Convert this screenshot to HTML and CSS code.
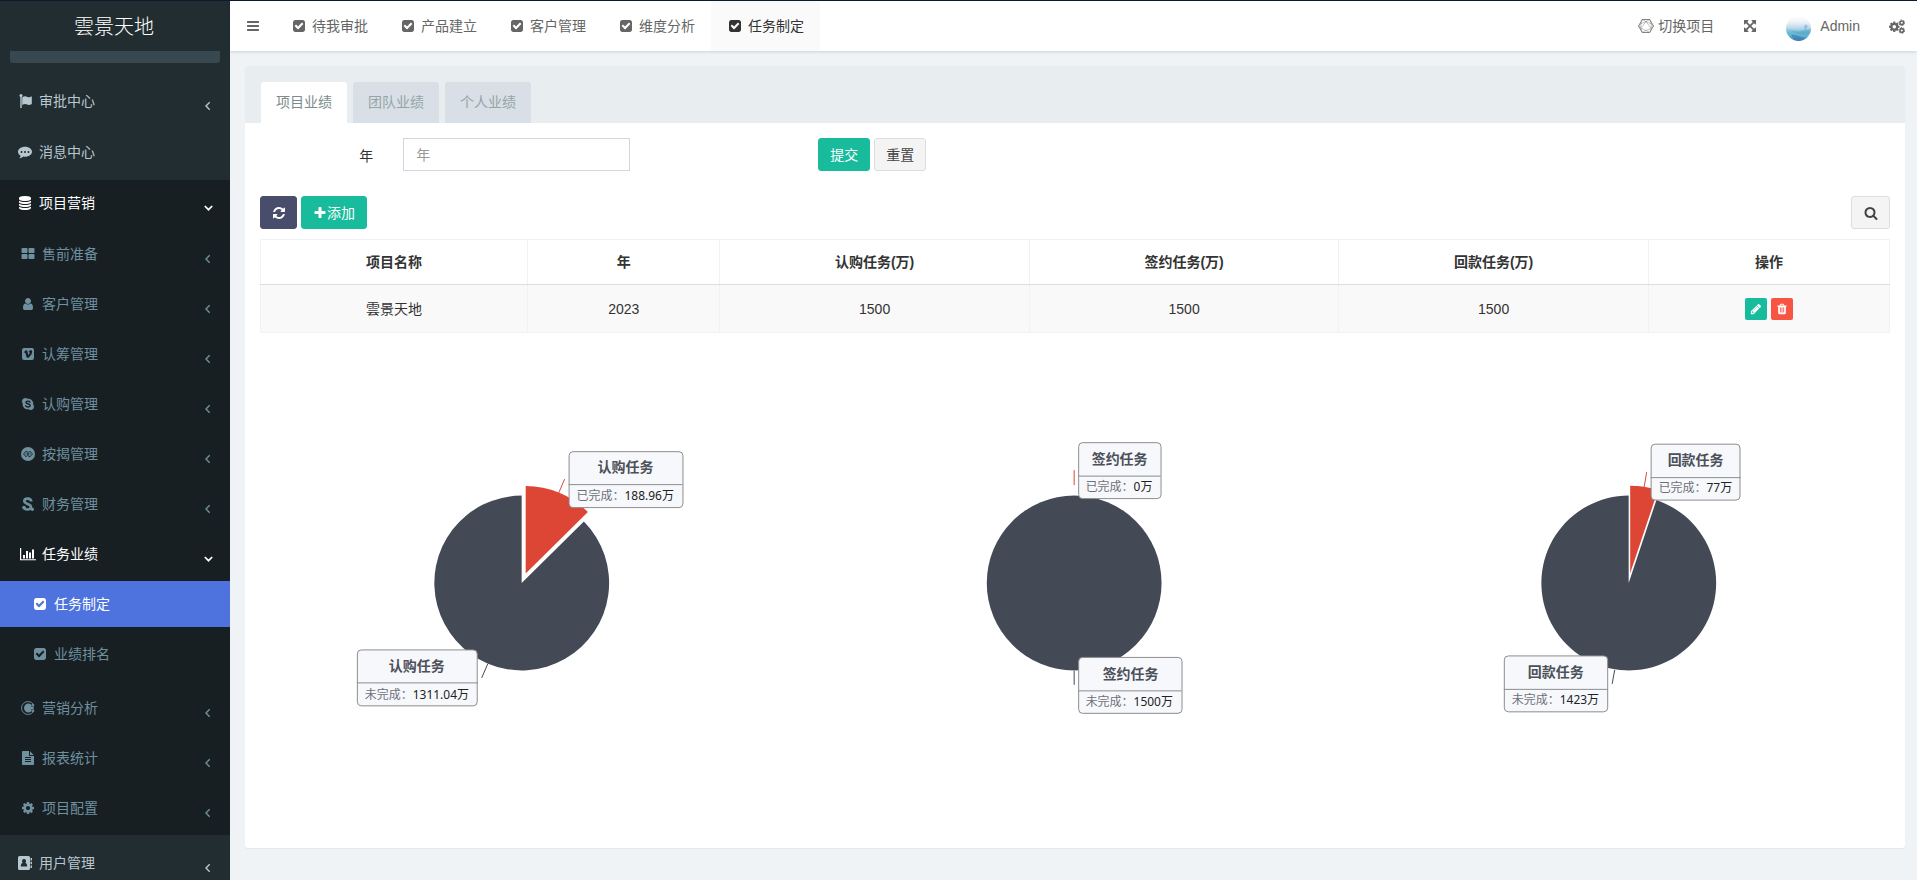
FILE: index.html
```html
<!DOCTYPE html>
<html lang="zh-CN">
<head>
<meta charset="utf-8">
<title>任务制定</title>
<link rel="stylesheet" href="styles.css">
</head>
<body>
<svg class="sprite" aria-hidden="true">
  <symbol id="check" viewBox="0 0 1792 1792"><path d="M813 1299l614-614q19-19 19-45t-19-45l-102-102q-19-19-45-19t-45 19l-467 467-211-211q-19-19-45-19t-45 19l-102 102q-19 19-19 45t19 45l358 358q19 19 45 19t45-19zm851-883v960q0 119-84.500 203.500t-203.500 84.500h-960q-119 0-203.500-84.500t-84.500-203.500v-960q0-119 84.500-203.500t203.500-84.500h960q119 0 203.500 84.500t84.500 203.500z"/></symbol>
  <symbol id="bars" viewBox="0 0 1792 1792"><path d="M1664 1344v128q0 26-19 45t-45 19h-1408q-26 0-45-19t-19-45v-128q0-26 19-45t45-19h1408q26 0 45 19t19 45zm0-512v128q0 26-19 45t-45 19h-1408q-26 0-45-19t-19-45v-128q0-26 19-45t45-19h1408q26 0 45 19t19 45zm0-512v128q0 26-19 45t-45 19h-1408q-26 0-45-19t-19-45v-128q0-26 19-45t45-19h1408q26 0 45 19t19 45z"/></symbol>
  <symbol id="search" viewBox="0 0 1792 1792"><path d="M1216 832q0-185-131.500-316.500t-316.500-131.500-316.500 131.500-131.500 316.500 131.500 316.500 316.500 131.500 316.500-131.500 131.500-316.500zm512 832q0 52-38 90t-90 38q-54 0-90-38l-343-342q-179 124-399 124-143 0-273.500-55.500t-225-150-150-225-55.500-273.500 55.500-273.500 150-225 225-150 273.500-55.500 273.500 55.500 225 150 150 225 55.500 273.500q0 220-124 399l343 343q37 37 37 90z"/></symbol>
  <symbol id="refresh" viewBox="0 0 1792 1792"><path d="M1639 1056q0 5-1 7-64 268-268 434.500t-478 166.500q-146 0-282.500-55t-243.500-157l-129 129q-19 19-45 19t-45-19-19-45v-448q0-26 19-45t45-19h448q26 0 45 19t19 45-19 45l-137 137q71 66 161 102t187 36q134 0 250-65t186-179q11-17 53-117 8-23 30-23h192q13 0 22.500 9.500t9.500 22.500zm25-800v448q0 26-19 45t-45 19h-448q-26 0-45-19t-19-45 19-45l138-138q-148-137-349-137-134 0-250 65t-186 179q-11 17-53 117-8 23-30 23h-199q-13 0-22.500-9.500t-9.500-22.500v-7q65-268 270-434.500t480-166.500q146 0 284 55.500t245 156.500l130-129q19-19 45-19t45 19 19 45z"/></symbol>
  <symbol id="plus" viewBox="0 0 1792 1792"><path d="M1600 736v192q0 40-28 68t-68 28h-416v416q0 40-28 68t-68 28h-192q-40 0-68-28t-28-68v-416h-416q-40 0-68-28t-28-68v-192q0-40 28-68t68-28h416v-416q0-40 28-68t68-28h192q40 0 68 28t28 68v416h416q40 0 68 28t28 68z"/></symbol>
  <symbol id="expand" viewBox="0 0 1792 1792"><path d="M1411 541l-355 355 355 355 144-144q29-31 70-14 39 17 39 59v448q0 26-19 45t-45 19h-448q-42 0-59-40-17-39 14-69l144-144-355-355-355 355 144 144q31 30 14 69-17 40-59 40h-448q-26 0-45-19t-19-45v-448q0-42 40-59 39-17 69 14l144 144 355-355-355-355-144 144q-19 19-45 19-12 0-24-5-40-17-40-59v-448q0-26 19-45t45-19h448q42 0 59 40 17 39-14 69l-144 144 355 355 355-355-144-144q-31-30-14-69 17-40 59-40h448q26 0 45 19t19 45v448q0 42-39 59-13 5-25 5-26 0-45-19z"/></symbol>
  <symbol id="pencil" viewBox="0 0 1792 1792"><path d="M491 1536l91-91-235-235-91 91v107h128v128h107zm523-928q0-22-22-22-10 0-17 7l-542 542q-7 7-7 17 0 22 22 22 10 0 17-7l542-542q7-7 7-17zm-54-192l416 416-832 832h-416v-416zm683 96q0 53-37 90l-166 166-416-416 166-165q36-38 90-38 53 0 91 38l235 234q37 39 37 91z"/></symbol>
  <symbol id="trash" viewBox="0 0 1792 1792"><path d="M704 1376v-704q0-14-9-23t-23-9h-64q-14 0-23 9t-9 23v704q0 14 9 23t23 9h64q14 0 23-9t9-23zm256 0v-704q0-14-9-23t-23-9h-64q-14 0-23 9t-9 23v704q0 14 9 23t23 9h64q14 0 23-9t9-23zm256 0v-704q0-14-9-23t-23-9h-64q-14 0-23 9t-9 23v704q0 14 9 23t23 9h64q14 0 23-9t9-23zm-544-992h448l-48-117q-7-9-17-11h-317q-10 2-17 11zm928 32v64q0 14-9 23t-23 9h-96v948q0 83-47 143.500t-113 60.500h-832q-66 0-113-58.500t-47-141.500v-952h-96q-14 0-23-9t-9-23v-64q0-14 9-23t23-9h309l70-167q15-37 54-63t79-26h320q40 0 79 26t54 63l70 167h309q14 0 23 9t9 23z"/></symbol>
  <symbol id="database" viewBox="0 0 1792 1792"><path d="M896 768q237 0 443-43t325-127v170q0 69-103 128t-280 93.500-385 34.500-385-34.500-280-93.500-103-128v-170q119 84 325 127t443 43zm0 768q237 0 443-43t325-127v170q0 69-103 128t-280 93.500-385 34.500-385-34.500-280-93.500-103-128v-170q119 84 325 127t443 43zm0-384q237 0 443-43t325-127v170q0 69-103 128t-280 93.500-385 34.500-385-34.500-280-93.500-103-128v-170q119 84 325 127t443 43zm0-1152q208 0 385 34.500t280 93.500 103 128v128q0 69-103 128t-280 93.500-385 34.500-385-34.500-280-93.500-103-128v-128q0-69 103-128t280-93.500 385-34.500z"/></symbol>
  <symbol id="grid" viewBox="0 0 1792 1792"><path d="M832 1024v384q0 52-38 90t-90 38h-512q-52 0-90-38t-38-90v-384q0-52 38-90t90-38h512q52 0 90 38t38 90zm0-768v384q0 52-38 90t-90 38h-512q-52 0-90-38t-38-90v-384q0-52 38-90t90-38h512q52 0 90 38t38 90zm896 768v384q0 52-38 90t-90 38h-512q-52 0-90-38t-38-90v-384q0-52 38-90t90-38h512q52 0 90 38t38 90zm0-768v384q0 52-38 90t-90 38h-512q-52 0-90-38t-38-90v-384q0-52 38-90t90-38h512q52 0 90 38t38 90z"/></symbol>
  <symbol id="user" viewBox="0 0 1792 1792"><path d="M1536 1399q0 109-62.500 187t-150.500 78h-854q-88 0-150.500-78t-62.500-187q0-85 8.500-160.500t31.500-152 58.500-131 94-89 134.500-34.500q131 128 313 128t313-128q76 0 134.500 34.500t94 89 58.500 131 31.500 152 8.500 160.500zm-256-887q0 159-112.500 271.500t-271.500 112.500-271.500-112.500-112.500-271.500 112.500-271.500 271.500-112.500 271.500 112.500 112.500 271.500z"/></symbol>
  <symbol id="file" viewBox="0 0 1792 1792"><path d="M1596 476q14 14 28 36h-472v-472q22 14 36 28zm-476 164h544v1056q0 40-28 68t-68 28h-1344q-40 0-68-28t-28-68v-1600q0-40 28-68t68-28h800v544q0 40 28 68t68 28zm160 736v-64q0-14-9-23t-23-9h-704q-14 0-23 9t-9 23v64q0 14 9 23t23 9h704q14 0 23-9t9-23zm0-256v-64q0-14-9-23t-23-9h-704q-14 0-23 9t-9 23v64q0 14 9 23t23 9h704q14 0 23-9t9-23zm0-256v-64q0-14-9-23t-23-9h-704q-14 0-23 9t-9 23v64q0 14 9 23t23 9h704q14 0 23-9t9-23z"/></symbol>
  <symbol id="cog" viewBox="0 0 1792 1792"><path d="M1152 896q0-106-75-181t-181-75-181 75-75 181 75 181 181 75 181-75 75-181zm512-109v222q0 12-8 23t-20 13l-185 28q-19 54-39 91 35 50 107 138 10 12 10 25t-9 23q-27 37-99 108t-94 71q-12 0-26-9l-138-108q-44 23-91 38-16 136-29 186-7 28-36 28h-222q-14 0-24.500-8.500t-11.500-21.500l-28-184q-49-16-90-37l-141 107q-10 9-25 9-14 0-25-11-126-114-165-168-7-10-7-23 0-12 8-23 15-21 51-66.500t54-70.500q-27-50-41-99l-183-27q-13-2-21-12.500t-8-23.500v-222q0-12 8-23t19-13l186-28q14-46 39-92-40-57-107-138-10-12-10-24 0-10 9-23 26-36 98.500-107.500t94.500-71.500q13 0 26 10l138 107q44-23 91-38 16-136 29-186 7-28 36-28h222q14 0 24.500 8.500t11.500 21.500l28 184q49 16 90 37l142-107q9-9 24-9 13 0 25 10 129 119 165 170 7 8 7 22 0 12-8 23-15 21-51 66.500t-54 70.500q26 50 41 98l183 28q13 2 21 12.500t8 23.500z"/></symbol>
  <symbol id="cogs" viewBox="0 0 15 14"><use href="#cog" x="-0.800" y="1.500" width="11.500" height="11.500"/><g fill="none" stroke="currentColor"><circle cx="12" cy="3.500" r="1.700" stroke-width="1.500"/><circle cx="12" cy="3.500" r="2.700" stroke-width="0.900" stroke-dasharray="1.400 1.400"/><circle cx="12" cy="10.700" r="1.700" stroke-width="1.500"/><circle cx="12" cy="10.700" r="2.700" stroke-width="0.900" stroke-dasharray="1.400 1.400"/></g></symbol>
  <symbol id="flag" viewBox="0 0 14 14"><circle cx="3" cy="1.600" r="1.500"/><path d="M2.300 1.500h1.400v12.500H2.300zM4.200 3.200c2-1 3.300-1.200 5.200-.3 1.500.7 2.500.4 4.400-.6v7.700c-2 1.100-3.200 1.200-4.700.5-1.800-.9-3-.6-4.900.4z"/></symbol>
  <symbol id="comment" viewBox="0 0 14 14"><path fill-rule="evenodd" d="M7 1.800c3.900 0 7 2.200 7 5s-3.100 5-7 5c-.6 0-1.200 0-1.700-.2-1.200 1-2.500 1.500-4 1.700.8-.8 1.200-1.500 1.400-2.500C1 9.900 0 8.400 0 6.800c0-2.800 3.100-5 7-5zM3.500 5.900a1 1 0 100 2 1 1 0 000-2zm3.500 0a1 1 0 100 2 1 1 0 000-2zm3.500 0a1 1 0 100 2 1 1 0 000-2z"/></symbol>
  <symbol id="vimeo" viewBox="0 0 14 14"><path fill-rule="evenodd" d="M3 1h8a2 2 0 012 2v8a2 2 0 01-2 2H3a2 2 0 01-2-2V3a2 2 0 012-2zM2.700 5.200l.5.600c.8-.5 1-.4 1.300.6l.9 3.200c.5 1.500 1.300 1.700 2.600.6 1.600-1.400 2.900-3.200 3.200-5.100.4-2.400-2.900-2.500-3.500.2 1.100-.5 1.200.4.700 1.300-.8 1.500-1.200 1.500-1.400.4L6.500 4.400c-.2-1.200-.9-1.500-1.900-.8z"/></symbol>
  <symbol id="skype" viewBox="0 0 14 14"><path d="M4.400 1c.9 0 1.600.3 2.200.7 3.400-.3 6.100 2.500 5.600 5.800 1.900 2.500.3 5.500-2.500 5.500-.9 0-1.700-.3-2.300-.8-3.500.4-6.200-2.400-5.700-5.800C0 3.900 1.600 1 4.400 1z"/><path d="M9 5.100C8.300 3.700 4.900 3.800 5 5.400c.1 1.700 4.200 1 4.200 3.100 0 1.900-3.700 1.900-4.500.2" fill="none" stroke="#181f23" stroke-width="1.400" stroke-linecap="round"/></symbol>
  <symbol id="circle-links" viewBox="0 0 14 14"><circle cx="7" cy="7" r="7"/><path d="M6.800 5L5 4.200 2.500 7 5 9.800 7.500 7 6.200 5.700M7.200 9L9 9.800 11.500 7 9 4.200 6.500 7l1.300 1.300M4.400 7h1M8.600 7h1" fill="none" stroke="#181f23" stroke-width="0.900"/></symbol>
  <symbol id="finance" viewBox="0 0 14 14"><path d="M10.300 4.500C10.100.8 3.500.6 3.300 4c-.2 3.600 6.900 2.200 6.600 6-.3 3.300-6.200 3.200-7.100.4" fill="none" stroke="currentColor" stroke-width="2.600"/><circle cx="3" cy="10.500" r="1.800"/><circle cx="11.300" cy="12.300" r="1.700"/></symbol>
  <symbol id="chart" viewBox="0 0 16 14"><path d="M0 1h1.200v11.200H16v1H0zM3 8h2v3.500H3zM6 4h2v7.500H6zM9 5.500h2v6H9zM12 2.500h2v9h-2z"/></symbol>
  <symbol id="analysis" viewBox="0 0 14 14"><path d="M12.300 3.200A6.500 6.500 0 1012.300 10.800" fill="none" stroke="currentColor" stroke-width="0.900"/><path d="M10.800 4.200A4.400 4.400 0 1010.800 9.800L9.800 8.600h2.900v-3.200H9.800zM10.800 2.600l2.600 1-.6 2-2-1zM10.800 11.400l2.600-1-.6-2-2 1z"/></symbol>
  <symbol id="contact" viewBox="0 0 14 14"><path fill-rule="evenodd" d="M1.500 0h9A1.500 1.500 0 0112 1.500v11a1.500 1.500 0 01-1.500 1.500h-9A1.500 1.500 0 010 12.500v-11A1.500 1.500 0 011.500 0zM6 3a2 2.200 0 00-1.300 3.900C3.400 7.100 2.800 8.300 2.800 10.500h6.400c0-2.200-.6-3.400-1.900-3.600A2 2.200 0 006 3z"/><path d="M12.500 2h1.500v2.500h-1.500zM12.500 5.700h1.500v2.500h-1.500zM12.500 9.400h1.500v2.500h-1.500z"/></symbol>
  <symbol id="left" viewBox="0 0 10 10"><path d="M6.700 1.300L3 5l3.700 3.700" fill="none" stroke="currentColor" stroke-width="1.400"/></symbol>
  <symbol id="down" viewBox="0 0 10 10"><path d="M1.800 3L5.500 6.700 9.200 3" fill="none" stroke="currentColor" stroke-width="1.700"/></symbol>
  <symbol id="hexagon" viewBox="0 0 16 14"><path d="M4.300.5h7.400L15.500 7l-3.800 6.500H4.300L.5 7z" fill="none" stroke="currentColor" stroke-width="0.800"/><path d="M4.300.5l-1.500 4.300v4.500l1.500 4.200L8 11.500l3.700 2 1.500-4.200V4.800L11.700.5 8 2.500zM.5 7l2.300-2.200L8 2.500l5.200 2.300L15.500 7l-2.300 2.300L8 11.500 2.800 9.300zM2.800 9.300L8 2.500l5.200 6.800" fill="none" stroke="currentColor" stroke-width="0.400"/></symbol>
</svg>

<div class="app">
  <aside class="sidebar">
    <a class="brand" href="#">雲景天地</a>
    <div class="side-search"></div>
    <ul class="menu">
      <li><a class="item" href="#"><svg class="icon"><use href="#flag"/></svg>审批中心<svg class="arrow"><use href="#left"/></svg></a></li>
      <li><a class="item" href="#"><svg class="icon"><use href="#comment"/></svg>消息中心</a></li>
      <li class="open"><a class="item current" href="#"><svg class="icon"><use href="#database"/></svg>项目营销<svg class="arrow"><use href="#down"/></svg></a>
        <ul class="submenu">
          <li><a class="item" href="#"><svg class="icon"><use href="#grid"/></svg>售前准备<svg class="arrow"><use href="#left"/></svg></a></li>
          <li><a class="item" href="#"><svg class="icon"><use href="#user"/></svg>客户管理<svg class="arrow"><use href="#left"/></svg></a></li>
          <li><a class="item" href="#"><svg class="icon"><use href="#vimeo"/></svg>认筹管理<svg class="arrow"><use href="#left"/></svg></a></li>
          <li><a class="item" href="#"><svg class="icon"><use href="#skype"/></svg>认购管理<svg class="arrow"><use href="#left"/></svg></a></li>
          <li><a class="item" href="#"><svg class="icon"><use href="#circle-links"/></svg>按揭管理<svg class="arrow"><use href="#left"/></svg></a></li>
          <li><a class="item" href="#"><svg class="icon"><use href="#finance"/></svg>财务管理<svg class="arrow"><use href="#left"/></svg></a></li>
          <li><a class="item current" href="#"><svg class="icon wide"><use href="#chart"/></svg>任务业绩<svg class="arrow"><use href="#down"/></svg></a>
            <ul class="leafmenu">
              <li><a class="item selected" href="#"><svg class="icon"><use href="#check"/></svg>任务制定</a></li>
              <li><a class="item" href="#"><svg class="icon"><use href="#check"/></svg>业绩排名</a></li>
            </ul>
          </li>
          <li><a class="item" href="#"><svg class="icon"><use href="#analysis"/></svg>营销分析<svg class="arrow"><use href="#left"/></svg></a></li>
          <li><a class="item" href="#"><svg class="icon"><use href="#file"/></svg>报表统计<svg class="arrow"><use href="#left"/></svg></a></li>
          <li><a class="item" href="#"><svg class="icon"><use href="#cog"/></svg>项目配置<svg class="arrow"><use href="#left"/></svg></a></li>
        </ul>
      </li>
      <li><a class="item" href="#"><svg class="icon"><use href="#contact"/></svg>用户管理<svg class="arrow"><use href="#left"/></svg></a></li>
    </ul>
  </aside>

  <div class="page">
    <header class="topbar">
      <button class="toggle" type="button" aria-label="菜单"><svg class="icon"><use href="#bars"/></svg></button>
      <nav class="pages">
        <a href="#"><svg class="icon"><use href="#check"/></svg>待我审批</a>
        <a href="#"><svg class="icon"><use href="#check"/></svg>产品建立</a>
        <a href="#"><svg class="icon"><use href="#check"/></svg>客户管理</a>
        <a href="#"><svg class="icon"><use href="#check"/></svg>维度分析</a>
        <a class="active" href="#"><svg class="icon"><use href="#check"/></svg>任务制定</a>
      </nav>
      <div class="tools">
        <a class="switch" href="#"><svg class="icon wide"><use href="#hexagon"/></svg>切换项目</a>
        <button class="plain" type="button" aria-label="全屏"><svg class="icon"><use href="#expand"/></svg></button>
        <a class="account" href="#">
          <svg class="avatar" viewBox="0 0 25 25"><defs><linearGradient id="sky" x1="0" y1="0" x2="0" y2="1"><stop offset="0" stop-color="#fff"/><stop offset=".25" stop-color="#edf2f7"/><stop offset=".5" stop-color="#b5d6e8"/><stop offset=".65" stop-color="#68bdd4"/><stop offset=".8" stop-color="#62b4d1"/><stop offset="1" stop-color="#3b72a8"/></linearGradient></defs><circle cx="12.500" cy="12.500" r="12.500" fill="url(#sky)"/><path d="M0 12c5 2 10 5 15 3 5-1 8-4 6-6-1-1-3 0-3 2 0 3 4 4 7 1 0 4-2 6-4 7-8 0-14-3-21-7z" fill="#5299c4" opacity=".4"/><path d="M5 19c6-1 10 3 15 3-5 4-12 3-15-3z" fill="#3f7fb5" opacity=".7"/></svg>
          Admin</a>
        <button class="plain" type="button" aria-label="设置"><svg class="icon cogs"><use href="#cogs"/></svg></button>
      </div>
    </header>

    <main class="content">
      <section class="panel">
        <nav class="tabs">
          <a class="active" href="#">项目业绩</a>
          <a href="#">团队业绩</a>
          <a href="#">个人业绩</a>
        </nav>
        <div class="panel-body">
          <form class="filter">
            <div class="field">
              <label for="year">年</label>
              <div class="control"><input id="year" type="text" placeholder="年"></div>
            </div>
            <div class="field actions">
              <button class="btn success" type="submit">提交</button>
              <button class="btn" type="reset">重置</button>
            </div>
          </form>
          <div class="toolbar">
            <button class="btn primary" type="button" aria-label="刷新"><svg class="icon"><use href="#refresh"/></svg></button>
            <button class="btn success" type="button"><svg class="icon"><use href="#plus"/></svg>添加</button>
            <button class="btn find" type="button" aria-label="搜索"><svg class="icon"><use href="#search"/></svg></button>
          </div>
          <table class="list">
            <colgroup><col class="c-name"><col class="c-year"><col class="c-task"><col class="c-task"><col class="c-task"><col></colgroup>
            <thead><tr><th>项目名称</th><th>年</th><th>认购任务(万)</th><th>签约任务(万)</th><th>回款任务(万)</th><th>操作</th></tr></thead>
            <tbody><tr><td>雲景天地</td><td>2023</td><td>1500</td><td>1500</td><td>1500</td>
              <td><div class="ops"><button class="op edit" type="button" aria-label="编辑"><svg class="icon small"><use href="#pencil"/></svg></button><button class="op delete" type="button" aria-label="删除"><svg class="icon small"><use href="#trash"/></svg></button></div></td></tr></tbody>
          </table>

          <div class="charts">
            <svg class="pie" viewBox="0 0 554 500" role="img" aria-label="认购任务">
              <path class="rest" d="M277 250L339.300 188.500A87.500 87.500 0 1 1 277 162.500z"/>
              <path class="done" d="M281 240.500V153A87.500 87.500 0 0 1 343.300 179z"/>
              <path class="line-done" d="M314 160l6-14"/><path class="line-rest" d="M243 331l-6 14"/>
              <g class="tip"><rect x="324.500" y="118.500" width="114" height="56" rx="4"/><path d="M324 151.500h114"/><text class="title" x="381" y="139">认购任务</text><text class="row" x="332" y="167">已完成：<tspan>188.96万</tspan></text></g>
              <g class="tip"><rect x="112.500" y="317" width="120" height="56" rx="4"/><path d="M112 350h121"/><text class="title" x="172" y="338">认购任务</text><text class="row" x="120" y="366">未完成：<tspan>1311.04万</tspan></text></g>
            </svg>
            <svg class="pie" viewBox="0 0 554 500" role="img" aria-label="签约任务">
              <circle class="rest" cx="276.500" cy="250" r="87.500"/>
              <path class="line-done" d="M276.500 137v15"/><path class="line-rest" d="M276.500 338v14"/>
              <g class="tip"><rect x="281" y="109.500" width="82.500" height="56" rx="4"/><path d="M281 143h82"/><text class="title" x="322" y="131">签约任务</text><text class="row" x="288" y="158">已完成：<tspan>0万</tspan></text></g>
              <g class="tip"><rect x="281" y="324.500" width="103.500" height="56" rx="4"/><path d="M281 358h103"/><text class="title" x="333" y="346">签约任务</text><text class="row" x="288" y="373">未完成：<tspan>1500万</tspan></text></g>
            </svg>
            <svg class="pie" viewBox="0 0 554 500" role="img" aria-label="回款任务">
              <path class="rest" d="M277 250L304.800 167A87.500 87.500 0 1 1 277 162.500z"/>
              <path class="done" d="M278.500 240.200V152.700A87.500 87.500 0 0 1 306.300 157.200z"/>
              <path class="line-done" d="M292.500 154l2.500-15"/><path class="line-rest" d="M263 337l-2.500 14"/>
              <g class="tip"><rect x="299.500" y="111" width="89" height="56" rx="4"/><path d="M299 144.500h90"/><text class="title" x="344" y="132">回款任务</text><text class="row" x="307" y="159">已完成：<tspan>77万</tspan></text></g>
              <g class="tip"><rect x="152.500" y="323" width="103.500" height="56" rx="4"/><path d="M152 356.500h104"/><text class="title" x="204" y="344">回款任务</text><text class="row" x="160" y="371">未完成：<tspan>1423万</tspan></text></g>
            </svg>
          </div>
        </div>
      </section>
    </main>
  </div>
</div>
</body>
</html>
```
FILE: styles.css
```css
* { box-sizing: border-box; }
body {
  margin: 0;
  font: 14px/20px "Liberation Sans", "Noto Sans CJK SC", sans-serif;
  color: #333;
  background: #eff3f6;
}
a { color: inherit; text-decoration: none; }
ul { list-style: none; margin: 0; padding: 0; }
button, input { font: inherit; }
svg { fill: currentColor; flex: none; }
.sprite { position: absolute; width: 0; height: 0; }
.icon { width: 14px; height: 14px; }
.icon.small { width: 12px; height: 12px; }
.icon.wide { width: 16px; }
.icon.cogs { width: 16px; height: 15px; }

.app {
  display: flex;
  height: 100vh;
  overflow: hidden;
  border-top: 1px solid #0b1b2c;
}

.sidebar { flex: none; width: 230px; background: #222d32; color: #b8c7ce; overflow: hidden; }
.brand {
  display: flex;
  align-items: center;
  justify-content: center;
  height: 50px;
  padding: 2px 2px 0 0;
  font-size: 20px;
  font-weight: 300;
  color: #fff;
}
.side-search { height: 12px; margin: 0 10px 15px; background: #374850; border-radius: 0 0 3px 3px; }
.item { display: flex; align-items: center; height: 46px; padding: 0 17px 0 18px; }
.item .icon { margin-right: 7px; }
.item .icon.wide { margin-right: 6px; }
.item .arrow { width: 10px; height: 10px; margin: 10px 0 0 auto; }
.menu { display: flex; flex-direction: column; gap: 5px; }
.menu .open { background: #181f23; }
.submenu { display: flex; flex-direction: column; gap: 4px; padding: 5px 0 4px; }
.submenu .item { padding-left: 21px; color: #6e909f; }
.submenu .item .wide { margin-left: -1px; }
.leafmenu { display: flex; flex-direction: column; gap: 4px; padding: 4px 0; }
.leafmenu .item { padding-left: 33px; }
.menu .item.current { color: #fff; }
.menu .item.selected { background: #4e73df; color: #fff; }

.page { flex: 1; min-width: 0; }
.topbar {
  display: flex;
  align-items: stretch;
  height: 50px;
  background: #fff;
  color: #666;
  box-shadow: 0 1px 3px rgba(0, 21, 41, .15);
}
.toggle, .plain { display: flex; align-items: center; padding: 0; border: 0; background: none; color: inherit; }
.toggle { width: 45px; padding-left: 16px; }
.pages { display: flex; }
.pages a { display: flex; align-items: center; gap: 6px; width: 109px; padding: 0 16px 0 17px; }
.pages .active { background: #fafafa; color: #333; }
.tools { display: flex; margin-left: auto; padding-right: 12px; gap: 29px; }
.tools a { display: flex; align-items: center; }
.switch { gap: 4px; }
.account { gap: 9px; }
.avatar { width: 25px; height: 25px; margin-top: 4px; }

.content { padding: 15px 12px 0 15px; }
.panel { background: #fff; border-radius: 3px; box-shadow: 0 1px 1px rgba(0, 0, 0, .05); }
.tabs { display: flex; gap: 6px; padding: 16px 16px 0; background: #e8edf0; border-radius: 3px 3px 0 0; }
.tabs a { height: 41px; padding: 10px 15px; background: #d8dfe6; color: #95a5a6; border-radius: 3px 3px 0 0; }
.tabs .active { background: #fff; color: #7b8a8b; }
.panel-body { padding: 15px; }

.filter { display: flex; margin: 0 -15px 25px; }
.field { display: flex; width: 25%; padding: 0 15px; }
.field label { width: 33.333%; padding: 8px 15px 0 0; text-align: right; }
.control { flex: 1; padding: 0 15px; }
.control input {
  display: block;
  width: 100%;
  height: 33px;
  padding: 0 12px;
  border: 1px solid #d2d6de;
  background: #fff;
  color: #555;
  outline: 0;
}
.control input::placeholder { color: #999; }
.actions { gap: 4px; }
.actions::before { content: ""; width: calc(33.333% + 11px); }
.btn {
  display: flex;
  align-items: center;
  justify-content: center;
  height: 33px;
  padding: 0 11px;
  border: 1px solid #ddd;
  border-radius: 3px;
  background: #f4f4f4;
  color: #444;
}
.btn.success { background: #18bc9c; border-color: #18bc9c; color: #fff; }
.btn.primary { width: 37px; background: #474d6b; border-color: #474d6b; color: #fff; }
.toolbar { display: flex; gap: 4px; margin-bottom: 10px; }
.toolbar .find { width: 39px; margin-left: auto; }

.list { width: 100%; table-layout: fixed; border-collapse: collapse; text-align: center; }
.c-name { width: 16.400%; }
.c-year { width: 11.800%; }
.c-task { width: 19%; }
.list th, .list td { border: 1px solid #f2f2f2; padding: 0; }
.list th { height: 45px; border-bottom-color: #ddd; }
.list td { height: 48px; background: #f9f9f9; }
.ops { display: flex; justify-content: center; gap: 4px; }
.op { display: flex; align-items: center; justify-content: center; width: 22px; height: 22px; padding: 0; border: 0; border-radius: 2px; color: #fff; }
.edit { background: #18bc9c; }
.delete { background: #f75444; }

.charts { display: grid; grid-template-columns: repeat(3, 1fr); margin: 0 -15px; }
.pie { display: block; width: 100%; height: 500px; font-family: "Noto Sans", "Noto Sans CJK SC", sans-serif; }
.rest { fill: #434a56; }
.done { fill: #dd4634; }
.line-done { stroke: #dd4634; }
.line-rest { stroke: #434a56; }
.tip rect { fill: #f6f8fc; stroke: #8c8d8e; }
.tip path { stroke: #8c8d8e; }
.title { font-size: 14px; font-weight: bold; text-anchor: middle; fill: #4c5058; }
.row { font-size: 12px; fill: #6e7079; }
.row tspan { fill: #222; }
```
